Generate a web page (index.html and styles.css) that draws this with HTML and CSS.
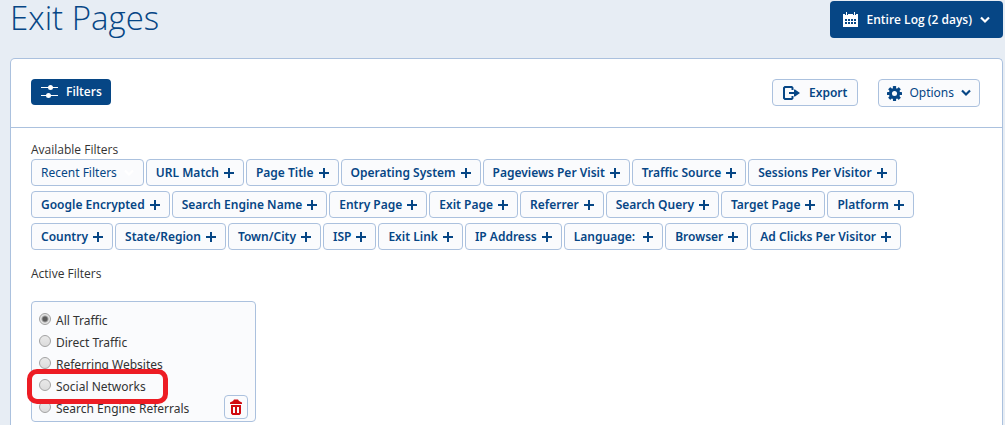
FILE: index.html
```html
<!DOCTYPE html>
<html lang="en">
<head>
<meta charset="utf-8">
<meta name="viewport" content="width=device-width, initial-scale=1">
<title>Exit Pages</title>
<link rel="stylesheet" href="styles.css">
</head>
<body>
<svg class="defs" width="0" height="0" aria-hidden="true">
  <symbol id="plus" viewBox="0 0 10 10"><path d="M4 0h2v4h4v2H6v4H4V6H0V4h4z" fill="currentColor"/></symbol>
  <symbol id="chevron" viewBox="0 0 10 8"><path d="M1 1.5l4 4 4-4" fill="none" stroke="currentColor" stroke-width="2.2"/></symbol>
</svg>
<header class="page-header">
  <h1 class="page-title">Exit Pages</h1>
  <button class="date-button" type="button">
    <svg class="icon-calendar" viewBox="0 0 15 15" aria-hidden="true">
      <path fill="#fff" d="M0 2h15v13H0z"/>
      <path fill="#064685" d="M2 0h3v3H2zM10 0h3v3h-3z"/>
      <path fill="#fff" d="M3 0h1v3H3zM11 0h1v3h-1z"/>
      <path fill="#064685" d="M2 7h2v2H2zM5 7h2v2H5zM8 7h2v2H8zM11 7h2v2h-2zM2 10h2v2H2zM5 10h2v2H5zM8 10h2v2H8zM11 10h2v2h-2z"/>
    </svg>
    <span>Entire Log (2 days)</span>
    <svg class="icon-chevron" aria-hidden="true"><use href="#chevron"/></svg>
  </button>
</header>
<main class="panel">
  <div class="toolbar">
    <button class="filters-button" type="button">
      <svg class="icon-sliders" viewBox="0 0 17 14" aria-hidden="true">
        <path fill="#fff" d="M0 2h17v1H0zM0 10h17v1H0z"/>
        <circle cx="9.5" cy="2.5" r="2.5" fill="#fff"/><circle cx="7.5" cy="10.5" r="2.5" fill="#fff"/>
      </svg>
      <span>Filters</span>
    </button>
    <div class="toolbar-actions">
      <button class="tool-button tool-button-strong" type="button">
        <svg class="icon-export" viewBox="0 0 17 14" aria-hidden="true">
          <path d="M9.500 4V1.800L8.700 1H2L1 2v10l1 1h6.700l.8-.8V10" fill="none" stroke="currentColor" stroke-width="2"/>
          <path d="M6 6h5V3.500h1L17 7l-5 3.500h-1V8H6z" fill="currentColor"/>
        </svg>
        <span>Export</span>
      </button>
      <button class="tool-button tool-button-options" type="button">
        <svg class="icon-gear" viewBox="0 0 16 16" aria-hidden="true">
          <g fill="currentColor">
            <rect x="6.300" y="0" width="3.400" height="16" rx=".6"/>
            <rect x="6.300" y="0" width="3.400" height="16" rx=".6" transform="rotate(45 8 8)"/>
            <rect x="6.300" y="0" width="3.400" height="16" rx=".6" transform="rotate(90 8 8)"/>
            <rect x="6.300" y="0" width="3.400" height="16" rx=".6" transform="rotate(135 8 8)"/>
            <circle cx="8" cy="8" r="6"/>
          </g>
          <circle cx="8" cy="8" r="2.700" fill="#fafbfd"/>
        </svg>
        <span>Options</span>
        <svg class="icon-chevron" aria-hidden="true"><use href="#chevron"/></svg>
      </button>
    </div>
  </div>
  <section class="filters">
    <h2 class="section-label">Available Filters</h2>
    <div class="chips">
      <button class="chip chip-recent" type="button">Recent Filters<svg class="icon-chevron" aria-hidden="true"><use href="#chevron"/></svg></button>
      <button class="chip" type="button">URL Match<svg class="icon-plus" aria-hidden="true"><use href="#plus"/></svg></button>
      <button class="chip" type="button">Page Title<svg class="icon-plus" aria-hidden="true"><use href="#plus"/></svg></button>
      <button class="chip" type="button">Operating System<svg class="icon-plus" aria-hidden="true"><use href="#plus"/></svg></button>
      <button class="chip" type="button">Pageviews Per Visit<svg class="icon-plus" aria-hidden="true"><use href="#plus"/></svg></button>
      <button class="chip" type="button">Traffic Source<svg class="icon-plus" aria-hidden="true"><use href="#plus"/></svg></button>
      <button class="chip" type="button">Sessions Per Visitor<svg class="icon-plus" aria-hidden="true"><use href="#plus"/></svg></button>
      <button class="chip" type="button">Google Encrypted<svg class="icon-plus" aria-hidden="true"><use href="#plus"/></svg></button>
      <button class="chip" type="button">Search Engine Name<svg class="icon-plus" aria-hidden="true"><use href="#plus"/></svg></button>
      <button class="chip" type="button">Entry Page<svg class="icon-plus" aria-hidden="true"><use href="#plus"/></svg></button>
      <button class="chip" type="button">Exit Page<svg class="icon-plus" aria-hidden="true"><use href="#plus"/></svg></button>
      <button class="chip" type="button">Referrer<svg class="icon-plus" aria-hidden="true"><use href="#plus"/></svg></button>
      <button class="chip" type="button">Search Query<svg class="icon-plus" aria-hidden="true"><use href="#plus"/></svg></button>
      <button class="chip" type="button">Target Page<svg class="icon-plus" aria-hidden="true"><use href="#plus"/></svg></button>
      <button class="chip" type="button">Platform<svg class="icon-plus" aria-hidden="true"><use href="#plus"/></svg></button>
      <button class="chip" type="button">Country<svg class="icon-plus" aria-hidden="true"><use href="#plus"/></svg></button>
      <button class="chip" type="button">State/Region<svg class="icon-plus" aria-hidden="true"><use href="#plus"/></svg></button>
      <button class="chip" type="button">Town/City<svg class="icon-plus" aria-hidden="true"><use href="#plus"/></svg></button>
      <button class="chip" type="button">ISP<svg class="icon-plus" aria-hidden="true"><use href="#plus"/></svg></button>
      <button class="chip" type="button">Exit Link<svg class="icon-plus" aria-hidden="true"><use href="#plus"/></svg></button>
      <button class="chip" type="button">IP Address<svg class="icon-plus" aria-hidden="true"><use href="#plus"/></svg></button>
      <button class="chip" type="button">Language:&nbsp;<svg class="icon-plus" aria-hidden="true"><use href="#plus"/></svg></button>
      <button class="chip" type="button">Browser<svg class="icon-plus" aria-hidden="true"><use href="#plus"/></svg></button>
      <button class="chip" type="button">Ad Clicks Per Visitor<svg class="icon-plus" aria-hidden="true"><use href="#plus"/></svg></button>
    </div>
    <h2 class="section-label section-label-active">Active Filters</h2>
    <div class="active-filter">
      <div class="options">
        <label class="option"><input class="radio" type="radio" name="traffic" checked><span>All Traffic</span></label>
        <label class="option"><input class="radio" type="radio" name="traffic"><span>Direct Traffic</span></label>
        <label class="option"><input class="radio" type="radio" name="traffic"><span>Referring Websites</span></label>
        <label class="option option-marked"><input class="radio" type="radio" name="traffic"><span>Social Networks</span></label>
        <label class="option"><input class="radio" type="radio" name="traffic"><span>Search Engine Referrals</span></label>
      </div>
      <button class="delete-button" type="button" aria-label="Remove filter">
        <svg class="icon-trash" viewBox="0 0 12 16" aria-hidden="true">
          <path fill="#d10a10" fill-rule="evenodd" d="M0 5V3.500L3 2l1-1.500h4L9 2l3 1.500V5zM1 6h10v8.500L9.500 16h-7L1 14.500zM3 8v6h2V8zM7 8v6h2V8z"/>
        </svg>
      </button>
    </div>
  </section>
</main>
</body>
</html>
```
FILE: styles.css
```css
* { box-sizing: border-box; }
body {
  margin: 0;
  min-height: 100vh;
  display: flex;
  flex-direction: column;
  background: #e7edf4;
  color: #333;
  font: 12px/18px "Open Sans", "Noto Sans", sans-serif;
}
button { font: inherit; color: #064685; cursor: pointer; }
svg { flex: none; }
.defs { position: absolute; }
.page-header {
  display: flex;
  justify-content: space-between;
  align-items: flex-start;
  padding: 1px 2px 0 10px;
  height: 58px;
}
.page-title {
  margin: 0;
  color: #064685;
  font-size: 33px;
  font-weight: 300;
  line-height: 34px;
}
.date-button {
  display: flex;
  align-items: center;
  height: 37px;
  padding: 0 13px;
  border: 0;
  border-radius: 4px;
  background: #064685;
  color: #fff;
  font-weight: 600;
}
.date-button span { margin: 0 8px; }
.icon-calendar { width: 15px; height: 15px; }
.icon-chevron { width: 10px; height: 8px; }
.icon-plus { width: 10px; height: 10px; margin-left: 5px; }
.panel {
  flex: 1;
  margin: 0 2px 0 10px;
  border: 1px solid #abc1de;
  border-bottom: 0;
  border-radius: 5px 5px 0 0;
  background: #fff;
}
.toolbar {
  display: flex;
  justify-content: space-between;
  align-items: flex-start;
  padding: 20px 22px 20px 20px;
  border-bottom: 1px solid #abc1de;
}
.filters-button {
  display: flex;
  align-items: center;
  gap: 8px;
  height: 26px;
  padding: 0 9px 0 10px;
  border: 0;
  border-radius: 4px;
  background: #064685;
  color: #fff;
  font-weight: 600;
}
.icon-sliders { width: 17px; height: 14px; }
.toolbar-actions { display: flex; align-items: flex-start; gap: 20px; }
.tool-button {
  display: flex;
  align-items: center;
  gap: 9px;
  height: 27px;
  padding: 0 9px;
  border: 1px solid #abc1de;
  border-radius: 4px;
  background: #fafbfd;
  font-family: "Noto Sans", "Open Sans", sans-serif;
}
.tool-button-strong { padding: 0 10px; font-weight: 600; }
.tool-button-options { gap: 7px; height: 28px; padding: 0 8px; }
.icon-export { width: 17px; height: 14px; }
.icon-gear { width: 15px; height: 15px; }
.filters { padding: 13px 20px 0; }
.section-label { margin: 0; font-size: 12px; font-weight: 400; line-height: 18px; }
.chips { display: flex; flex-wrap: wrap; gap: 5px 2px; }
.chip {
  display: flex;
  align-items: center;
  height: 27px;
  padding: 0 9px;
  border: 1px solid #abc1de;
  border-radius: 4px;
  background: #fafbfd;
  font-family: "Noto Sans", "Open Sans", sans-serif;
  font-weight: 600;
  white-space: nowrap;
}
.chip-recent { font-weight: 400; }
.chip-recent .icon-chevron { margin-left: 7px; color: #fff; }
.section-label-active { margin-top: 15px; }
.active-filter {
  display: flex;
  justify-content: space-between;
  align-items: flex-end;
  width: 225px;
  margin-top: 18px;
  padding: 7px 7px 2px;
  border: 1px solid #abc1de;
  border-radius: 4px;
  background: #fafbfd;
  font-family: "Noto Sans", "Open Sans", sans-serif;
}
.option {
  position: relative;
  display: flex;
  align-items: center;
  gap: 5px;
  height: 22px;
}
.option span { padding-top: 2px; line-height: 22px; }
.radio {
  appearance: none;
  width: 12px;
  height: 12px;
  margin: 0 0 2px;
  border: 1px solid #a2a2a2;
  border-radius: 50%;
  background: linear-gradient(#e9e9e9, #dcdcdc);
}
.radio:checked { background: radial-gradient(circle, #5c5c5c 0 2px, #e4e4e4 4px); }
.option-marked::after {
  content: "";
  position: absolute;
  inset: -6px -22px -7px -12px;
  border: 5px solid #ed1c24;
  border-radius: 10px;
}
.option-marked { width: max-content; z-index: 1; }
.delete-button {
  display: flex;
  align-items: center;
  justify-content: center;
  width: 24px;
  height: 24px;
  padding: 0;
  border: 1px solid #abc1de;
  border-radius: 4px;
  background: #fafbfd;
}
.icon-trash { width: 12px; height: 16px; }
```
